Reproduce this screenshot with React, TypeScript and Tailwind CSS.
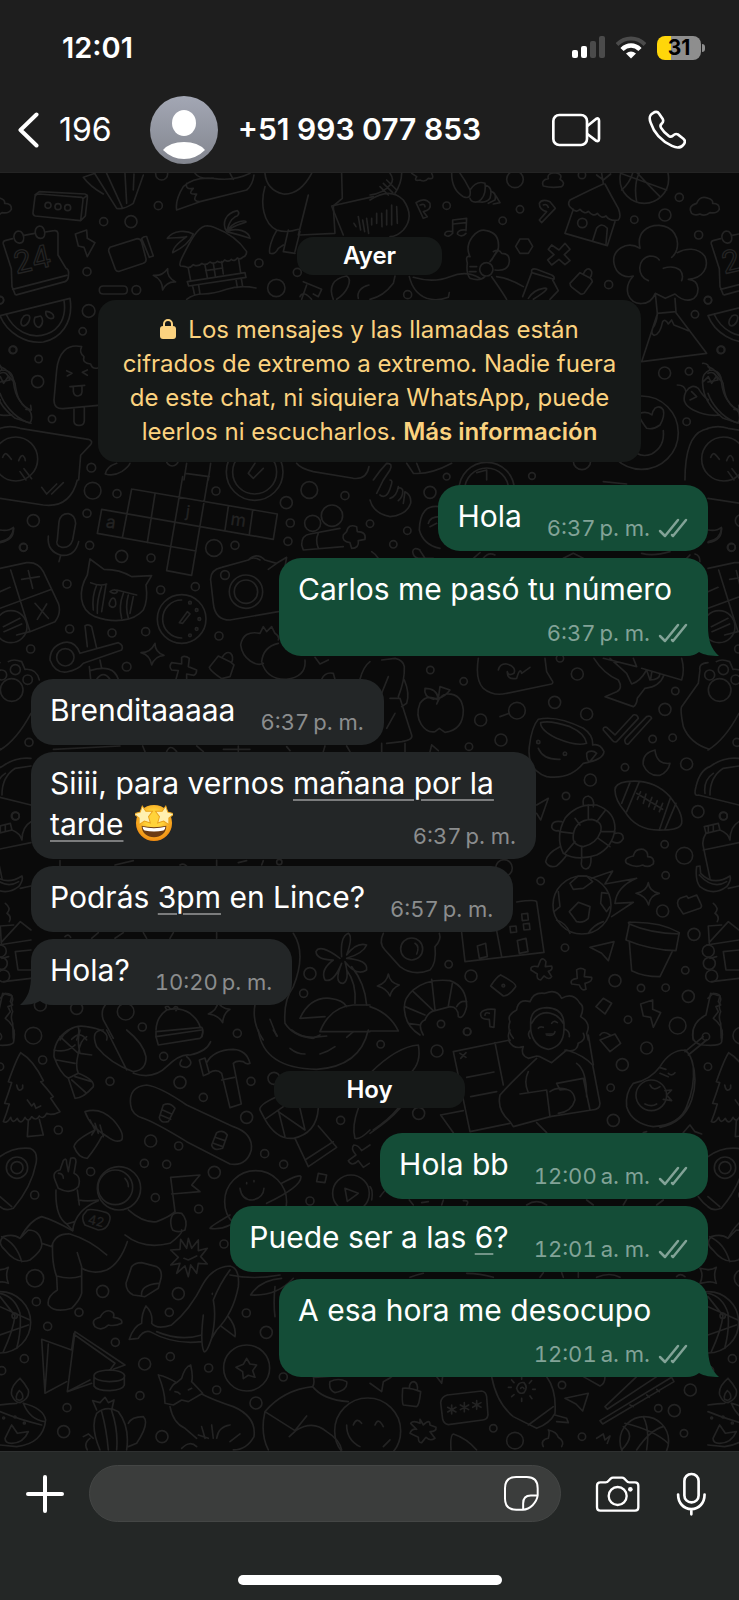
// App.tsx
import type { ReactNode } from 'react';

type Tile = {
  x: number;
  y: number;
  circles: number[][];
  paths: string[];
  labels?: { x: number; y: number; text: string; size: number; rotate: number }[];
};

// Wallpaper doodles, drawn at 3x and scaled down per tile
const TILES: Tile[] = [
  {
    x: 0,
    y: 170,
    circles: [
      [485, 12, 18], [475, 107, 12], [311, 155, 12], [393, 155, 18], [261, 305, 12], [409, 360, 13], [777, 279, 12],
      [829, 354, 26], [892, 307, 12], [266, 423, 19], [248, 484, 11], [38, 540, 11], [116, 567, 11], [113, 635, 18],
      [156, 747, 11], [274, 893, 13], [144, 106, 9], [174, 110, 9], [203, 113, 9], [764, 906, 85], [764, 906, 66],
      [0, 390, 11], [47, 867, 66], [517, 870, 18],
    ],
    paths: [
      'M105 75L118 65L255 72Q264 74 262 84L256 138L242 152M118 72L245 82Q250 84 249 90L242 152L106 138Q98 136 99 128L105 80Q107 72 118 72M249 86L262 76',
      'M38 206L15 212Q8 214 10 222L34 296L36 350L45 372Q46 376 52 374L195 335Q205 330 205 320L206 308Q205 298 198 295L174 255V190Q172 180 162 182L136 186M72 196L104 190M38 358L200 316',
      'M56 183C68 183 74 200 70 212C66 222 50 222 44 210C38 198 44 184 56 183M119 168C131 168 137 186 133 198C129 208 113 208 108 196C102 184 107 170 119 168',
      'M226 192L260 180L262 205L285 218L262 260L252 232L235 228Z',
      'M330 232Q324 238 327 246L346 298Q350 306 358 304L430 280Q440 276 438 266L425 216Q422 206 412 206ZM440 200L460 258L448 262L425 206Q432 198 440 200',
      'M542 288Q536 284 545 265C570 215 590 175 615 168Q630 166 642 172C690 190 720 215 740 245Q740 258 728 262Q722 270 712 264Q704 276 694 268Q686 278 674 270Q666 282 652 274Q642 284 630 276Q618 288 606 280Q594 292 580 284Q568 298 556 290Z',
      'M565 295L572 332M562 335L735 308L738 322L566 348ZM716 268L722 308M615 285L622 322M665 275L670 312M640 280L646 318M617 302L668 294M578 348L584 375M596 346L600 372M708 328L712 352M724 325L728 350M560 388Q580 372 610 372T680 358T768 354',
      'M680 185C665 160 675 130 712 122C722 130 712 140 706 140C690 150 686 165 680 185C700 150 740 150 738 156C730 160 700 165 680 185C710 170 748 185 750 205C735 200 700 190 680 185M580 192C560 180 520 180 502 205C520 202 545 205 560 200C540 215 520 230 518 248C535 240 565 225 580 192',
      'M503 296Q500 322 527 336Q500 334 488 360Q488 330 460 316Q488 318 503 296Z',
      'M310 348H370Q382 348 382 360T370 372H310Q298 372 298 360T310 348Z',
      'M0 437L210 385C222 460 180 505 130 516C80 522 20 490 0 437M18 432C40 480 90 510 140 492C180 478 200 440 192 392M72 438C60 450 60 466 70 468C84 466 92 448 88 438Q82 432 72 438M105 442C98 458 108 472 118 472C130 464 130 446 122 438ZM138 424C134 438 148 450 160 444C164 434 152 424 138 424Z',
      'M245 530C200 520 175 550 170 600L162 690Q162 718 190 716L294 706M245 530Q236 548 252 560Q246 580 272 582Q276 598 294 594M222 716V755Q224 768 240 766Q252 766 253 752V714M200 602L216 610L202 618M262 600L247 607L262 616M210 650L254 646M220 650V664Q222 678 234 678Q248 676 246 660V648',
      'M0 590Q30 600 45 640C50 680 60 700 80 715Q98 725 94 750Q92 762 80 756C40 740 10 700 0 670M0 610Q20 600 30 630L0 636M92 706L94 720L78 718',
      'M0 775Q30 765 60 775L265 808Q280 812 272 824L242 856L236 930M8 862Q14 848 20 852T34 868M56 872Q64 852 70 858T76 872M60 905L78 930M72 896L95 926',
      'M250 22L285 10M250 22Q270 50 310 72M285 12L350 115Q370 120 400 100L430 15M320 10L368 115M375 10L380 100M402 12L400 60',
      'M530 120Q525 90 550 50Q580 20 640 25Q700 35 750 10M530 120L600 95L740 60Q758 45 762 15M560 40Q555 60 580 55Q560 75 590 72Q575 95 600 95M585 10Q600 30 640 24M690 10L700 28',
      'M795 10Q800 60 850 72Q900 75 935 10M795 50C780 100 790 160 830 180Q860 190 895 178M925 75L895 195M865 180L850 245M900 185L885 245M830 182C815 205 805 240 810 250Q825 255 835 235L850 225M850 245L885 250M1000 108L1005 190L900 195M1025 10L1027 85L1000 108',
      'M995 108L1120 80M995 108L1030 195M1062 160L1068 170M1075 140L1082 180M1088 150L1094 185M1100 145L1106 190',
      'M910 335L965 358L955 380L940 372M920 345L905 388M900 380Q910 360 935 388M1000 388C985 350 1000 325 1040 318C1060 330 1040 370 1010 388M1075 385C1070 365 1085 350 1107 345',
      'M316 912Q320 890 350 880M316 912Q340 920 365 905Q385 892 390 880M560 880L552 930M632 880L625 930M556 910L628 920M745 910L765 880M745 910L760 925L790 895M890 880Q900 895 940 905L1060 925Q1100 930 1107 890',
    ],
    labels: [{ x: 48, y: 312, text: '24', size: 92, rotate: -13 }],
  },
  {
    x: 370,
    y: 170,
    circles: [
      [435, 28, 25], [636, 15, 11], [928, 82, 12], [885, 135, 18], [793, 149, 11], [986, 195, 12], [230, 107, 11],
      [450, 118, 11], [398, 152, 11], [349, 298, 20], [716, 344, 12], [1014, 391, 11], [975, 433, 11], [113, 374, 12],
      [884, 609, 18], [957, 604, 11], [1054, 539, 11], [950, 755, 11], [486, 918, 10], [230, 920, 10], [823, 27, 73],
      [637, 159, 14], [815, 788, 110], [350, 960, 83], [350, 960, 66], [636, 873, 26],
    ],
    paths: [
      'M755 60Q800 20 790 -40M752 10L890 60M775 -20Q830 40 870 80M800 95Q790 40 810 5',
      'M520 48Q512 30 535 26Q530 10 555 8Q580 12 570 28Q588 38 575 50Q545 55 520 48',
      'M245 10Q245 60 280 80Q305 90 300 60Q285 30 270 10M300 60Q320 30 345 40Q350 80 325 95Q305 100 300 85M345 45Q370 50 360 85Q350 100 325 95M365 65Q380 70 375 90L355 100M378 78L390 98L370 102',
      'M0 75Q40 70 60 45Q75 30 60 10M30 50L55 75M40 40L68 68M50 30L80 60M95 10Q95 40 75 70',
      'M0 90Q60 50 100 90Q135 140 100 180Q80 200 60 200M5 145V165M20 130V160M35 130L36 170M50 120V165M65 105V165M80 110L82 160',
      'M125 10L140 20Q130 35 150 30Q165 38 175 25Q195 30 185 10',
      'M138 98Q165 80 180 100Q185 120 160 125L172 140L160 145ZM150 105Q165 100 165 110',
      'M248 190V150L290 145L288 182M250 162L288 158M248 185Q225 180 224 194Q235 205 248 190M288 180Q262 178 262 192Q275 204 288 190',
      'M508 100Q515 85 540 95L556 115L515 158L508 150L530 125Q508 120 508 100M520 105Q530 100 535 112',
      'M700 42Q660 60 600 90Q590 105 605 115Q620 130 630 118Q645 135 655 124Q670 142 682 130Q695 148 708 138Q720 155 745 150Q755 140 745 115Q725 80 705 42M610 118L585 190L712 227L735 155M668 212L680 175Q695 155 712 175L708 222M680 15L700 30L722 12M695 10L700 40',
      'M965 130Q952 108 980 100Q990 75 1015 85Q1030 90 1028 100Q1050 100 1048 118Q1040 132 1020 128Q1005 140 990 132Q975 138 965 130',
      'M810 232C800 190 830 165 868 166C910 168 930 205 920 240Q915 255 905 262M810 235C770 210 725 240 732 280C738 315 770 325 790 318Q765 345 775 375C790 410 840 410 856 370L886 385L915 372C950 405 985 390 984 355Q982 330 955 328C1000 325 1018 290 1005 260C985 230 945 235 922 248M835 332C800 320 800 265 840 258Q860 258 868 270M880 295Q910 285 930 300Q942 315 935 332M856 370L862 430L918 425L915 385',
      'M862 432L815 575L1010 550L918 428M862 432Q860 460 848 475Q842 490 852 496Q870 495 878 455Q885 445 895 462L905 450L912 465Q925 470 955 482',
      'M300 260C280 220 320 170 350 182Q390 190 385 235L365 270M300 260Q285 255 292 280Q288 310 300 325Q330 335 345 320M370 245Q385 235 395 250Q420 250 418 275Q415 305 375 300M360 275L385 240M300 290H320M298 305H318',
      'M0 388Q40 380 70 340L75 318M118 320Q130 370 170 385Q200 395 235 382L238 368M130 322Q190 340 240 320T330 325M365 320Q400 370 410 388M380 320Q420 325 460 350',
      'M485 300Q490 295 500 298L545 315Q555 320 552 328L485 308ZM485 308L458 380M548 330L565 362L540 388M475 385Q490 360 520 355T490 388',
      'M450 207H475L488 229L475 250H450L437 229Z',
      'M545 225L567 240L585 220L600 238L583 254L600 272L585 284L567 268L545 285L533 270L552 254L535 238Z',
      'M630 308L600 340Q600 348 606 352L632 372Q642 374 645 366L667 335Q666 328 660 324ZM640 312Q650 290 662 300Q670 308 660 324',
      'M810 730Q800 735 830 775Q850 780 870 765Q885 740 880 720Q870 705 855 715Q848 722 846 735Q830 722 810 730M880 782Q885 830 845 852Q820 862 800 850',
      'M998 580Q1015 578 1020 600Q1055 600 1055 640C1060 680 1080 710 1107 720M1020 600Q995 610 998 640Q1000 700 1060 745L1107 760M1000 635L1015 620L1025 640L1040 618L1055 635M922 645Q945 645 948 665Q965 640 985 655Q1000 680 1015 690M948 665Q930 700 970 720Q1010 740 1050 735M965 665L980 680L960 690',
      'M945 930Q945 800 1000 780L1014 776',
      'M10 930Q30 900 50 880Q70 880 60 900L40 930M110 880L130 910Q180 915 245 880M140 880L150 905M320 908L350 900V930',
    ],
  },
  {
    x: 0,
    y: 480,
    circles: [
      [278, 32, 25], [351, 41, 12], [648, 33, 12], [928, 30, 25], [859, 68, 18], [1035, 47, 12], [871, 129, 12],
      [864, 184, 12], [996, 107, 32], [938, 130, 24], [100, 122, 18], [261, 100, 12], [269, 196, 12], [70, 202, 12],
      [365, 229, 18], [453, 234, 12], [642, 204, 25], [705, 196, 12], [482, 330, 12], [586, 320, 12], [201, 312, 12],
      [209, 447, 12], [336, 459, 12], [437, 455, 12], [657, 468, 12], [92, 507, 12], [380, 560, 13], [545, 417, 73],
      [738, 335, 35], [738, 335, 50], [675, 285, 13], [33, 440, 48], [196, 532, 26], [46, 569, 15], [83, 599, 14],
      [35, 630, 34], [5, 585, 15], [87, 787, 12], [570, 368, 4], [590, 390, 4], [598, 417, 4], [590, 447, 4], [570, 466, 4],
    ],
    paths: [
      'M0 55L130 75Q210 85 232 0M125 22L140 42L170 12M155 42L190 8',
      'M172 180Q165 195 185 202Q210 205 218 180L227 130Q225 105 205 101Q182 100 177 125ZM145 168Q140 215 185 226Q225 230 236 185M182 226L177 245',
      'M0 150Q25 155 40 142Q45 180 0 188',
      'M395 27L832 102L820 178L305 88L292 160L588 213M395 27L367 174M465 42L442 188M548 -10L500 272L575 286L625 -10M685 80L675 150M758 92L748 163',
      'M905 195Q905 165 930 162L1020 145M910 210L1030 200M905 195L910 210M955 160Q945 180 955 205M1040 155Q1045 130 1070 140L1072 155Q1100 155 1095 178L1075 182Q1078 205 1055 205L1050 188Q1025 185 1030 165Z',
      'M0 265L80 248Q115 245 130 275L175 370Q185 400 165 425L90 455L50 465M32 270L90 455M0 385L155 328M0 335L30 322M65 298L118 290M85 272L98 325M105 370L145 415M140 372L112 418M10 440L60 415M12 455L65 432',
      'M270 237L262 285C235 330 235 390 285 410C340 430 400 425 430 390C445 360 440 330 438 315L455 287L395 290Q360 268 312 268ZM272 308Q300 320 320 312M350 330L410 345M290 315Q275 350 280 390M305 320Q290 360 292 400M318 315L305 395M370 340Q355 380 365 415M385 345Q375 380 385 415M400 350L390 400M330 335Q345 325 352 335Q345 345 330 335M332 360Q320 380 340 382Q352 378 345 358Q338 350 332 360',
      'M545 360A57 57 0 1 0 545 474M538 428L562 395L570 402L548 430Z',
      'M632 300Q630 270 665 262L745 240Q770 215 795 240L830 250L860 232L855 260M632 300L640 370Q645 420 690 420L835 395M745 240Q760 228 780 240M805 268L830 250',
      'M255 438Q265 430 275 440L290 505M255 438L262 500M240 520L355 488Q372 495 365 510L250 550M240 520Q225 480 190 488Q150 500 150 540Q165 580 200 576Q235 570 250 550M268 560L272 598M300 540L305 565M270 572Q340 550 355 598M290 598Q310 570 330 598',
      'M465 490Q465 518 492 526Q465 528 455 555Q450 525 423 518Q452 518 465 490Z',
      'M545 532Q555 525 568 535L565 560L590 570Q590 582 582 586L560 582V598M545 532V552L515 548Q505 560 515 570L535 572L528 598',
      'M655 528L628 562Q630 572 665 596L690 590L702 555L690 545ZM668 530Q680 512 692 520Q702 530 695 548',
      'M780 460Q730 450 722 495C728 540 770 560 790 550M780 460L790 440L800 455L815 440L825 460Q840 470 835 480M785 545Q790 500 835 490M785 545Q800 600 860 598Q920 590 915 540M945 532L960 552L985 540',
      'M25 545Q40 535 65 545L75 568Q110 565 118 600M0 810Q50 780 93 700M965 598Q975 575 1000 580L1005 598M1080 598Q1090 560 1110 545',
      'M428 798L435 815M500 815Q510 790 530 815M590 798L610 815M670 808H750M715 798V815M860 800L870 812M975 798L970 815M1040 798L1050 815M160 808L360 798',
    ],
    labels: [
      { x: 316, y: 142, text: 'a', size: 52, rotate: 8 },
      { x: 556, y: 110, text: 'j', size: 48, rotate: 8 },
      { x: 690, y: 134, text: 'm', size: 52, rotate: 8 },
    ],
  },
  {
    x: 370,
    y: 480,
    circles: [
      [180, 37, 18], [112, 152, 11], [70, 193, 11], [0, 131, 11], [1085, 202, 11], [181, 570, 11], [281, 604, 11],
      [622, 582, 18], [916, 633, 11], [554, 667, 18], [441, 692, 25], [650, 702, 18], [332, 720, 18], [885, 688, 18],
      [848, 777, 11], [908, 773, 11], [393, 780, 18], [297, 800, 11], [950, 852, 18], [570, 535, 11],
      [505, 786, 5], [585, 821, 5],
    ],
    paths: [
      'M20 40L40 0M30 45Q50 60 62 20Q70 0 60 0M60 55Q80 50 85 20M85 62Q100 50 98 30Q92 20 85 25M0 60Q10 100 60 110Q110 105 122 70Q125 45 105 35L100 70',
      'M210 80Q150 70 148 150Q160 195 210 205M210 110Q180 110 175 130M200 130L180 140M150 210Q130 200 128 215Q130 232 145 235H190M150 212L165 235',
      'M5 215Q20 225 25 235M310 235L330 218M340 235Q355 215 375 225M580 235L610 220L640 235M815 220Q850 230 900 215M975 222Q990 225 990 245M960 225L950 235M1015 185Q1050 180 1055 145M700 5L770 12',
      'M205 660Q170 640 150 670C130 720 165 760 195 755L208 745L225 757Q280 750 280 690Q275 640 230 642Q210 645 200 672M205 655Q200 625 165 625Q160 650 190 658L200 655M210 620L240 630Q225 650 205 655Z',
      'M35 540L75 535Q100 540 103 560Q105 600 85 650M55 590L35 640M60 655H90L125 765Q130 780 95 785L50 790M35 790V816M105 790V816M75 700L50 745M103 600Q120 640 110 670L95 680',
      'M325 535Q315 600 340 625Q370 650 410 640L545 612Q552 608 545 600L530 575L525 535M385 570Q390 550 410 552Q440 560 432 580Q415 590 412 575Q410 600 440 595Q450 560 455 580L480 562',
      'M672 535Q700 580 745 600Q760 625 740 635L705 650L790 680Q800 675 802 655L825 625Q870 620 882 585M720 535L770 580L785 612Q810 605 830 570L840 600Q870 600 870 580M790 535L800 560L700 535M815 565L935 600Q945 570 935 535M845 578L842 598',
      'M505 718Q485 740 478 800Q470 870 530 890Q600 900 640 850Q700 840 702 815Q690 790 668 795Q670 765 640 745Q560 705 505 718M512 728Q540 720 600 740Q645 760 650 790Q620 800 560 775Q510 750 512 728M505 805Q520 840 570 838M650 820Q650 845 660 845L680 820Q670 810 655 815ZM418 700L390 710',
      'M700 750Q698 740 710 742L735 765L790 705Q802 702 805 715L740 785Q732 788 728 782ZM765 785Q762 780 770 772L830 710Q842 705 845 715L775 792Q768 795 765 785Z',
      'M855 810Q815 820 820 855Q835 890 870 886Q895 875 900 850Q860 855 855 810',
      'M1014 548Q985 550 990 570L985 610L935 680Q930 690 940 740Q960 790 1018 808M185 795L180 815M185 795L205 812',
    ],
  },
  {
    x: 0,
    y: 740,
    circles: [
      [46, 228, 12], [121, 795, 18], [230, 805, 18], [377, 815, 25], [427, 861, 12], [100, 887, 25],
      [930, 701, 18], [911, 760, 12], [838, 366, 8],
    ],
    paths: [
      'M15 760Q40 760 38 780Q30 800 38 815Q30 830 38 850L40 895M0 775L15 760',
      'M180 900Q210 850 260 860Q330 870 320 900M215 898Q240 870 260 900M230 900Q240 880 235 862M320 790Q300 810 310 840L340 895',
      'M468 870Q470 830 500 810Q540 800 570 820Q595 840 600 860M468 875L605 862Q612 870 605 890M468 875V890M500 808Q490 798 505 800Q515 815 525 800Q540 800 528 812',
      'M655 785Q660 805 690 808Q670 820 668 848Q655 825 625 822Q650 812 655 785',
      'M880 580Q920 640 880 740Q850 780 855 850Q880 890 940 895L960 885M765 795Q755 850 790 900M810 838L830 888',
      'M1020 655Q960 610 948 635Q950 660 1000 660Q960 690 975 720Q1000 730 1025 670Q1000 730 1030 730Q1050 720 1035 665Q1070 710 1100 690Q1105 660 1040 655Q1090 640 1100 615Q1070 605 1040 645Q1060 590 1045 580Q1020 590 1025 650M1040 690Q1070 730 1065 790M1055 680Q1095 730 1100 795',
      'M900 835Q930 770 990 775Q1030 780 1040 800M900 835L975 830M960 875Q990 800 1060 795H1110M960 875H1110',
      'M345 375L400 362M650 360V378M715 368L740 362M785 375L790 362M180 362V378M540 375Q550 368 560 378M275 595L295 578M345 595L370 578M430 578L440 595M510 595L520 578M650 595V578M195 590Q205 580 212 592',
    ],
  },
  {
    x: 370,
    y: 740,
    circles: [
      [765, 82, 11], [588, 168, 11], [661, 120, 18], [984, 215, 18], [1061, 228, 11], [884, 313, 11], [943, 347, 25],
      [887, 406, 11], [512, 423, 11], [878, 513, 18], [972, 583, 18], [585, 623, 11], [236, 673, 11], [303, 708, 18],
      [946, 691, 11], [735, 722, 18], [813, 744, 11], [887, 743, 11], [955, 769, 18], [774, 839, 11], [923, 857, 25],
      [213, 852, 11], [291, 875, 11], [402, 384, 25], [636, 495, 87], [125, 627, 33], [1015, 633, 18], [1018, 670, 18],
      [1025, 708, 18], [400, 737, 4], [1008, 890, 11],
    ],
    paths: [
      'M735 150Q735 130 770 125Q850 115 900 170Q940 220 935 250Q930 270 880 270Q800 275 765 215Q735 180 735 150M780 128L755 190M808 125L770 215M902 172L868 270M918 190L885 268M800 160L878 208M812 155L802 178M828 162L820 190M846 172L836 200M862 182L852 208M878 190L868 215',
      'M985 165Q970 170 978 140Q990 90 1020 80Q1060 50 1107 55M985 165L1107 195M1020 165Q1020 110 1060 85L1107 78M1005 160Q1000 120 1030 100',
      'M585 235Q620 190 680 195Q735 215 735 265Q730 320 680 345Q620 365 580 340Q555 290 585 235M610 285Q615 240 665 238Q700 245 692 275Q680 310 640 320Q605 315 610 285M615 235L630 255M655 195V238M705 212L680 245M735 275L695 275M720 320L685 295M635 358V320M585 340L615 305M568 275L610 280M640 195Q635 170 655 168Q675 175 670 200M735 280Q760 275 760 295Q750 315 728 305M635 360Q630 385 648 387Q665 385 663 352M570 320Q530 340 527 365Q535 385 560 378Q580 360 590 345M575 245Q545 240 545 262Q550 275 565 272',
      'M500 195L535 175L512 240L500 220',
      'M770 370Q758 355 790 348Q795 325 820 328Q835 335 833 350Q855 350 850 372Q835 385 818 375Q795 385 770 370',
      'M1003 260L1045 250L1050 270L1008 280ZM1015 258V278M1030 255V275M1008 280Q995 300 1000 320L1020 415M1050 270Q1075 280 1080 300M1000 330L1107 308M1080 300Q1080 260 1107 245',
      'M980 380L990 378L992 400Q1030 440 1080 408Q1085 420 1070 440Q1030 470 990 440Q975 420 980 380M988 405Q1030 450 1070 425M1075 445L1107 438',
      'M625 487L660 500L655 535Q640 550 620 545L598 515ZM600 430L625 408H650L668 425L640 445L610 448ZM565 455L570 500L552 515M560 540Q590 550 600 580M655 580Q670 555 700 545M720 500L710 515L692 490L695 458L712 460M665 415L728 393L705 432L800 415Q740 440 735 490L790 487L725 530',
      'M835 428Q838 455 868 460Q840 465 836 495Q828 468 798 460Q830 455 835 428',
      'M925 480Q920 490 925 500L940 522L990 505Q998 500 992 490L980 465L955 475L950 468L930 475Z',
      'M275 578L285 665L522 637L500 485Q495 478 440 486M380 572L395 650M322 618L347 610L352 650L328 655ZM442 602L468 595L474 635L448 640ZM455 522L473 520L475 540L457 542ZM460 552L478 550L480 568L462 570ZM420 560L438 558L440 576L422 578Z',
      'M778 552Q770 545 785 547Q870 545 928 578L918 632Q840 630 768 600ZM778 552Q840 580 928 582M778 605L785 692Q820 710 870 710L908 632',
      'M40 580Q25 610 45 630L90 680Q130 710 180 690Q200 670 195 620Q215 600 208 580M135 610Q150 620 140 642',
      'M55 702Q60 730 88 735Q65 745 60 768Q50 745 22 738Q50 730 55 702M660 622L732 605L715 662L695 640Z',
      'M512 660Q520 652 528 665L526 680L545 678Q550 690 535 694L545 710Q538 722 522 708L512 720Q498 718 502 702L483 690Q480 675 504 680Z',
      'M620 690Q632 680 645 690L643 710L665 712Q670 725 645 730L648 748Q635 755 628 735L605 732Q598 718 622 715Z',
      'M150 885Q110 860 105 820Q95 780 130 750Q170 715 240 722Q290 740 290 800Q280 840 265 830Q265 800 240 800L195 812Q175 815 165 840Q140 850 160 885M105 800L165 825M130 755L190 812M185 718L195 810M248 725L235 798M290 785Q270 780 260 800M115 850L150 855',
      'M392 705Q380 710 362 738L400 768Q415 770 437 740Q440 730 392 705M375 808L372 862L360 860L358 838Q330 840 332 820Q340 805 375 808M358 820Q345 815 345 826M0 800Q60 820 85 873H0',
      'M430 895Q410 870 420 845Q410 825 440 810Q445 775 480 785Q490 755 525 760Q560 745 575 775Q610 755 630 790Q645 800 632 830Q665 850 650 880L655 900M482 870V850Q480 805 530 803Q580 805 582 850V870M485 850Q500 820 530 818Q565 822 580 850M505 865Q510 858 520 862M545 850Q550 840 562 848M528 882H548M585 868Q600 875 598 890M482 870Q470 880 480 895',
      'M700 775L725 790L705 822L678 800ZM812 792L848 780L848 808L872 818L850 862L842 832L820 828Z',
      'M1022 760L1050 768L1045 785L1052 795L1038 800L1045 815L1030 835M1022 760L1008 825Q960 850 970 900M1030 835Q1065 860 1055 900',
      'M1015 558L1055 555M1015 558L1018 610M1020 605L1075 545L1107 570M1060 635L1107 630M1060 635L1068 690H1107M1025 725L1107 715M1020 655L1040 650M1030 490Q1050 505 1035 520Q1050 530 1042 545M1010 615L1107 600',
    ],
  },
  {
    x: 0,
    y: 1030,
    circles: [
      [128, 90, 12], [330, 154, 12], [175, 300, 12], [491, 79, 12], [540, 157, 18], [610, 202, 12], [753, 154, 12],
      [740, 262, 18], [712, 10, 12], [452, 333, 18], [536, 348, 12], [794, 371, 12], [851, 403, 12], [433, 400, 12],
      [500, 403, 12], [272, 425, 12], [643, 427, 18], [466, 503, 12], [596, 537, 12], [104, 495, 12], [105, 745, 26],
      [308, 784, 18], [535, 791, 18], [109, 815, 12], [237, 847, 12], [143, 889, 12], [508, 847, 12], [739, 849, 12],
      [799, 907, 18], [346, 937, 12], [73, 986, 12], [434, 1002, 18], [511, 980, 12], [626, 1014, 12], [850, 1041, 12],
      [650, 1080, 12], [420, 1097, 12], [768, 1119, 18], [201, 1133, 12], [191, 1205, 18], [486, 1220, 18], [5, 1022, 12],
      [930, 513, 12], [672, 642, 12], [1022, 271, 12], [822, 145, 18], [740, 1014, 69], [357, 475, 65], [346, 472, 52],
      [51, 413, 32], [51, 413, 18], [0, 877, 92], [44, 857, 8], [1053, 490, 55], [767, 515, 93], [11, 1164, 3],
      [45, 1161, 3], [73, 1179, 3],
    ],
    paths: [
      'M62 68Q50 85 25 155L35 158Q25 190 14 220L28 222Q20 250 10 275Q20 282 32 262Q38 285 52 265Q62 288 75 262Q85 280 95 260Q108 275 118 258Q130 270 140 250Q155 258 180 245Q165 225 152 205L160 200Q140 175 122 155L130 152Q100 90 62 68M85 272L82 320L130 315L118 268M50 165Q55 190 68 175V165M82 210L95 228L102 220L108 235L122 228',
      'M205 0Q160 30 162 80Q180 130 205 145L225 205Q250 205 280 170Q285 150 235 130Q225 110 235 70Q240 30 260 20M162 60Q200 70 225 45M170 90L225 100M205 145L235 130M215 150L260 190M225 140L275 155M180 20L235 70M240 0Q230 30 240 70L275 75',
      'M290 50Q270 0 310 0M290 50Q330 100 400 125Q440 120 438 80Q430 40 380 0M320 0L380 120M400 130Q460 150 500 110T570 75Q620 65 632 35M545 90Q530 110 560 112Q585 100 560 80',
      'M468 20L475 45L600 25Q610 20 608 0M468 20L605 0',
      'M598 90L615 84L628 130L610 137ZM620 98Q640 60 700 58Q740 60 750 100Q740 105 730 95Q710 90 700 100L724 222L690 233L665 130Q650 115 628 128M665 150L703 142',
      'M775 0Q790 115 950 118Q1080 110 1105 0M870 55Q890 72 915 72M960 72Q985 65 1005 50M875 0Q900 22 940 22L980 18M820 0L832 18M1040 22L1060 5',
      'M392 225Q385 170 440 165Q480 170 560 225L700 290Q760 310 754 360Q740 410 690 402L560 335Q470 280 430 265Q395 255 392 225M490 225Q510 215 525 235L505 275Q480 280 478 262ZM488 240L515 252M482 255L512 268M650 308Q670 298 682 315L668 355Q640 365 635 345ZM645 322L675 332M640 340L668 350',
      'M255 245Q300 230 340 270Q375 310 365 330Q350 340 325 322Q270 290 255 245M270 270L285 300L275 315M285 300Q225 330 222 350Q235 385 262 385Q290 350 305 320M300 285L310 320M285 280L295 310',
      'M780 240Q775 225 830 200M780 240L795 268L850 230M795 268Q830 330 880 325Q950 310 955 235M835 240L855 320M835 245L915 300M900 235L915 300M885 325L925 410L1010 352L955 288M915 390L1000 335M1075 235Q1055 290 1065 325Q1080 330 1110 300',
      'M1110 345L1085 362Q1075 345 1062 345Q1050 355 1068 375L1045 392Q1055 412 1075 392L1090 412L1108 400',
      'M0 380Q40 350 90 355Q115 365 108 400Q95 470 40 535Q15 545 0 530M0 500L35 530',
      'M165 450Q155 425 180 420L190 392Q200 380 200 400L205 425L212 385Q228 380 228 395L222 430Q245 440 235 470Q210 495 175 475ZM175 430Q190 430 190 445M168 480Q165 560 200 582L225 575M232 480L238 525M200 582L218 602Q225 540 295 512M235 510Q260 515 295 510M375 445Q385 455 385 470M385 540Q430 580 470 575Q510 560 525 545M375 615Q430 660 510 640Q550 610 545 600M382 635Q360 700 320 720Q280 735 245 715',
      'M218 602Q160 570 125 560Q90 570 60 625Q40 610 10 620Q-10 640 15 660Q50 705 90 690Q130 660 125 640L155 650M60 625L85 600Q120 600 125 640M155 650Q165 610 210 612Q270 630 320 675M158 640Q155 700 170 740L172 780Q140 800 145 825Q165 850 215 835Q240 810 245 790V710L232 668M170 738Q210 750 245 738M5 620Q50 640 65 695M262 540Q275 535 320 548Q335 555 328 575Q320 600 295 600L255 585Q245 570 250 555Z',
      'M525 545L512 442L600 435L575 465L600 485L515 492M515 560Q520 545 545 550Q565 570 555 600Q535 610 518 600Q508 580 515 560',
      'M845 460Q900 430 903 440Q905 470 800 520M690 555Q630 590 630 595Q660 600 690 585M720 475Q725 510 757 510Q790 505 792 475M740 458v3M762 452v3M955 430L980 435L975 458L950 455ZM1035 475L1075 490L1042 514Z',
      'M565 625L575 655L595 630L595 662L622 655L602 680L622 702L595 700L590 730L572 705L565 740L555 708L530 730L540 700L512 705L535 682L512 660L540 658L542 628L560 655ZM552 685L565 690L590 678',
      'M395 710Q405 698 425 698L470 710Q488 720 483 745L475 775L435 800L400 795Q378 785 378 760ZM425 798Q420 765 475 760',
      'M285 890Q270 870 300 862Q315 835 335 845Q345 850 340 862Q370 865 365 880Q345 890 325 885Q305 905 285 890',
      'M388 928Q400 890 425 880Q425 850 438 828Q460 850 455 880Q470 900 515 885Q570 840 610 760Q640 710 690 708Q720 715 715 770Q700 850 650 900L635 925M388 928L415 925Q430 900 450 905Q520 945 605 935M470 905Q540 935 605 915M690 720Q660 760 640 810Q650 860 635 925Q620 970 612 965Q600 940 610 855M665 890L705 920Q710 890 685 860M637 790v3',
      'M0 719Q12 720 25 712Q15 735 25 760Q12 754 0 756M0 790Q45 800 60 850Q65 900 50 955M0 830L90 870M0 915L85 885M10 965Q40 900 45 857L0 800',
      'M125 928L135 1090L200 1055M125 928L215 960M145 942L135 1085M225 905L202 1085L275 1060M225 905L375 1005L340 1018M225 915L345 1000L330 1020M215 960L222 910M202 1085L270 1050M282 1040Q280 1022 328 1020Q372 1022 374 1038Q372 1055 328 1055Q285 1052 282 1040V1068Q290 1082 330 1082Q368 1080 373 1065V1040',
      'M60 1045Q30 1070 35 1095Q45 1118 60 1118Q90 1105 85 1080Q75 1060 60 1045M58 1082Q45 1095 50 1108Q60 1115 68 1105Q70 1090 58 1082M0 1125Q30 1120 50 1120M70 1120Q130 1135 137 1170Q130 1240 50 1250L0 1245M0 1145Q60 1170 125 1185M70 1120Q90 1170 135 1175M15 1225L35 1185L52 1210L85 1205Q70 1240 35 1240Q15 1240 15 1225',
      'M290 1140L278 1112L300 1118L315 1102L325 1118L342 1110L335 1140M290 1150Q270 1190 300 1260M290 1150Q320 1125 355 1145Q390 1190 380 1260M305 1145Q320 1200 325 1260M335 1142Q355 1200 350 1260M385 1180Q395 1160 430 1160Q450 1180 410 1240L385 1250M250 1220L265 1212L280 1225M262 1260Q250 1240 270 1225',
      'M475 1035Q500 1040 530 1058L545 1045Q555 1010 572 1005Q580 1040 575 1055L608 1090L565 1115L545 1110L520 1125L495 1120Q495 1085 475 1035M530 1058Q520 1060 510 1080M510 1130Q520 1180 555 1195L590 1225M605 1092Q640 1110 700 1130Q770 1160 762 1220Q740 1260 700 1260M605 1190L615 1225M635 1185L640 1225M690 1185Q655 1190 650 1225M595 1215L625 1225M720 1212L690 1235M545 1255Q570 1230 590 1250M525 1085Q535 1085 540 1092M565 1080L575 1075',
      'M740 985L750 1002L770 1005L758 1022L765 1042L745 1036L730 1046L728 1025L708 1012L730 1003Z',
      'M938 1070Q850 1080 795 1145L885 1202L920 1158M795 1145Q780 1210 805 1260M868 1220L890 1200Q940 1170 980 1205Q1020 1230 1025 1260M940 1040Q945 1060 938 1070Q970 1110 1045 1115M945 1042L1005 1038M990 1055Q985 1080 1005 1088Q1045 1080 1040 1055Q1015 1042 990 1055M1060 1185Q1070 1160 1085 1180M1040 1185Q1040 1230 1080 1250',
      'M752 795Q780 750 845 745M752 795Q830 800 880 745M825 770Q820 820 825 860M690 735Q760 750 840 735',
    ],
    labels: [{ x: 262, y: 580, text: '42', size: 38, rotate: 14 }],
  },
  {
    x: 370,
    y: 1030,
    circles: [
      [32, 43, 11], [292, 5, 11], [201, 63, 18], [146, 250, 18], [830, 54, 18], [757, 104, 18], [722, 173, 11],
      [730, 271, 18], [1014, 110, 11], [576, 1065, 11], [961, 1080, 18], [865, 1135, 11], [913, 1142, 18],
      [370, 1195, 11], [435, 1232, 25], [636, 1220, 11], [942, 1210, 11], [823, 1233, 73], [844, 196, 46], [-7, 1203, 99],
    ],
    paths: [
      'M0 130Q80 50 145 45Q155 100 120 130M0 310Q60 270 90 235M10 300Q100 240 110 180',
      'M250 65L420 30M250 65L300 305L420 280M375 38L400 165M290 142L372 126M302 200L380 185M270 70L288 82M288 68L272 85M212 255L280 242M212 255L250 308M500 78L510 80L545 98L590 60Q640 75 668 105L690 220Q690 240 665 240L540 260M415 30Q430 60 460 50Q450 75 475 85L500 78M585 60Q620 70 625 40',
      'M500 85Q420 160 390 195Q380 240 420 275L430 290L540 260L530 180L450 192M475 125Q460 155 475 188M560 160L640 145L660 240M560 160L570 180Q610 170 615 210Q605 245 565 250M620 100Q650 120 650 200M655 15L670 105M540 185Q560 170 590 178M500 278L530 308M420 0Q410 20 420 32M482 0Q490 50 535 58Q580 50 582 0M530 15Q550 20 555 5M625 40Q650 30 640 10',
      'M690 30L720 65L752 40L735 12ZM690 15Q700 0 720 15',
      'M945 60Q900 60 870 110Q840 150 790 160Q765 190 770 230Q785 280 850 290Q930 285 950 230Q975 170 970 110Q965 75 945 60M965 90Q985 150 965 210Q940 280 870 292M945 65L1000 20M955 75L1010 30M868 112L888 118M895 130Q905 140 915 128M870 130L895 140M840 165Q850 185 870 170M825 222Q845 232 860 222M885 182L905 180L890 195L905 212L880 208',
      'M970 0Q960 40 1000 45Q1060 50 1055 30V0',
      'M820 308L830 305M940 308Q955 290 960 285L975 305L995 312M0 470Q10 480 5 510M30 500Q45 480 48 480M118 510L130 525M155 518L175 515M220 510L215 525M280 512Q300 510 290 525M470 525Q500 505 530 525M650 510L670 525M760 525L770 508M860 525L880 510M120 742Q140 735 160 730M290 730Q330 730 370 742M510 742L520 728M580 742L575 728M625 728V742M680 742Q720 725 750 742M920 740Q930 728 945 740',
      'M1014 530Q1000 520 985 500M1014 719Q1002 718 990 715Q1002 735 990 760Q1002 758 1014 756',
      'M0 1060L35 1085L40 1055Q60 1045 65 1040M200 1040L215 1060L218 1040M15 1185Q25 1160 40 1190M40 1250L60 1230',
      'M98 1075Q95 1120 100 1125L140 1130Q148 1125 152 1085Q120 1072 98 1075M118 1075Q118 1055 132 1055Q145 1060 142 1082',
      'M232 1095L335 1083Q348 1085 350 1100L354 1155Q352 1170 338 1170L235 1184Q222 1182 218 1168L212 1118Q214 1100 232 1095M245 1125V1152M233 1132L258 1146M258 1132L233 1146M283 1118V1145M271 1125L296 1139M296 1125L271 1139M320 1112V1138M308 1118L333 1132M333 1118L308 1132',
      'M365 1040Q380 1120 430 1160L500 1195Q540 1180 555 1150Q560 1080 530 1040M475 1185L550 1130M555 1155L590 1165L595 1178L560 1175M440 1075Q445 1055 462 1058Q475 1072 462 1088Q445 1095 440 1075M452 1075Q458 1068 462 1076M455 1042V1048M425 1050L432 1058M485 1052L478 1060M415 1072H424M488 1078H496M425 1100L432 1094M455 1105V1114M480 1098L486 1106',
      'M585 1105L655 1090L638 1143L618 1122ZM800 1040L705 1130L712 1138L860 1040M690 1172L905 1042L912 1055L698 1182ZM780 1125L790 1130M830 1095L838 1102M860 1078L868 1085M640 1040L690 1068Q705 1062 705 1040',
      'M150 1168L160 1185Q180 1165 180 1185L198 1192Q200 1205 180 1205L195 1225Q180 1235 168 1222L155 1238Q145 1240 145 1222L120 1210Q125 1195 140 1198L122 1180Q130 1170 150 1180Z',
      'M520 1250Q510 1230 535 1225Q540 1205 535 1200Q560 1205 565 1222Q585 1235 575 1250',
      'M755 1260Q800 1215 760 1190M765 1180Q850 1200 895 1240M820 1160Q840 1200 830 1260M880 1190Q840 1200 800 1260M680 1225L700 1212L705 1230L720 1218L712 1240M243 1260Q240 1215 250 1212Q290 1225 320 1260',
    ],
  },
];

function Wallpaper() {
  return (
    <svg
      className="absolute inset-0 h-full w-full text-[#232323]"
      viewBox="0 173 739 1278"
      preserveAspectRatio="xMidYMin slice"
      fill="none"
      stroke="currentColor"
      strokeWidth={5}
      strokeLinecap="round"
      strokeLinejoin="round"
      aria-hidden="true"
    >
      <g id="doodles">
        {TILES.map((tile) => (
          <g key={`${tile.x}-${tile.y}`} transform={`translate(${tile.x} ${tile.y}) scale(0.3333)`}>
            {tile.circles.map(([cx, cy, r], i) => (
              <circle key={i} cx={cx} cy={cy} r={r} />
            ))}
            {tile.paths.map((d, i) => (
              <path key={i} d={d} />
            ))}
            {tile.labels?.map((l) => (
              <text
                key={l.text}
                transform={`translate(${l.x} ${l.y}) rotate(${l.rotate})`}
                fontSize={l.size}
                strokeWidth={l.size > 80 ? 4 : 1}
                fill={l.size > 80 ? 'none' : 'currentColor'}
              >
                {l.text}
              </text>
            ))}
          </g>
        ))}
      </g>
      {/* the pattern repeats sideways */}
      <use href="#doodles" x={708} />
      <use href="#doodles" x={-708} />
    </svg>
  );
}

function StarStruck() {
  const star = 'M0 -10L3 -4L10 -3L5 2L6 9L0 6L-6 9L-5 2L-10 -3L-3 -4Z';
  return (
    <svg className="ml-3 inline-block h-[38px] w-[38px] align-top" viewBox="0 0 40 40" role="img" aria-label="🤩">
      <defs>
        <radialGradient id="face" cx="0.5" cy="0.4" r="0.6">
          <stop offset="0.4" stopColor="#ffd33a" />
          <stop offset="1" stopColor="#f08a10" />
        </radialGradient>
      </defs>
      <circle cx="20" cy="20" r="19" fill="url(#face)" />
      <path d="M7 23C14 25 26 25 33 23C33 31 27 35 20 35S7 31 7 23Z" fill="#6b3a12" />
      <path d="M8 24C15 26 25 26 32 24Q32 27 30 28Q20 30 10 28Q8 27 8 24Z" fill="#fff" />
      <path d={star} transform="translate(9 12) rotate(-8)" fill="#fff0b0" stroke="#e9a21b" strokeWidth="1" />
      <path d={star} transform="translate(31 12) rotate(8)" fill="#fff0b0" stroke="#e9a21b" strokeWidth="1" />
    </svg>
  );
}

function Ticks() {
  return (
    <svg className="h-5 w-[30px]" viewBox="0 0 30 20" fill="none" stroke="currentColor" strokeWidth="2.500" strokeLinecap="round" strokeLinejoin="round">
      <path d="M2 13L7 18L20 2" />
      <path d="M14 17L15 18L28 2" />
    </svg>
  );
}

function DateLink({ children }: { children: ReactNode }) {
  return (
    <a href="#fecha" className="underline decoration-white/40 decoration-2 underline-offset-[5px]">
      {children}
    </a>
  );
}

interface Message {
  id: number;
  out: boolean;
  lines: ReactNode[];
  time: string;
  stacked?: boolean;
  wide?: boolean;
  tail?: boolean;
}

// Times keep the narrow no-break space that es-PE puts before "a. m." / "p. m."
const YESTERDAY_OUT: Message[] = [
  { id: 1, out: true, lines: ['Hola'], time: '6:37\u202fp. m.' },
  { id: 2, out: true, lines: ['Carlos me pasó tu número'], time: '6:37\u202fp. m.', stacked: true, tail: true },
];

const YESTERDAY_IN: Message[] = [
  { id: 3, out: false, lines: ['Brenditaaaaa'], time: '6:37\u202fp. m.' },
  {
    id: 4,
    out: false,
    lines: [
      <>Siiii, para vernos <DateLink>mañana por la</DateLink></>,
      <><DateLink>tarde</DateLink><StarStruck /></>,
    ],
    time: '6:37\u202fp. m.',
    wide: true,
  },
  { id: 5, out: false, lines: [<>Podrás <DateLink>3pm</DateLink> en Lince?</>], time: '6:57\u202fp. m.' },
  { id: 6, out: false, lines: ['Hola?'], time: '10:20\u202fp. m.', tail: true },
];

const TODAY: Message[] = [
  { id: 7, out: true, lines: ['Hola bb'], time: '12:00\u202fa. m.' },
  { id: 8, out: true, lines: [<>Puede ser a las <DateLink>6</DateLink>?</>], time: '12:01\u202fa. m.' },
  { id: 9, out: true, lines: ['A esa hora me desocupo'], time: '12:01\u202fa. m.', stacked: true, tail: true },
];

function Bubble({ message }: { message: Message }) {
  const { out, lines, time, stacked, wide, tail } = message;
  const last = lines.length - 1;

  return (
    <div
      className={`relative rounded-[22px] pt-[11px] pr-5 pb-[10px] pl-[19px] text-[30px] leading-[41px] text-white ${
        out ? 'self-end bg-[#144d37]' : 'self-start bg-[#232627]'
      } ${stacked ? 'min-w-[429px]' : ''} ${wide ? 'w-[505px]' : ''}`}
    >
      {tail && (
        <svg
          className={`absolute bottom-0 h-[30px] w-[34px] ${
            out ? '-right-[11px] text-[#144d37]' : '-left-[11px] -scale-x-100 text-[#232627]'
          }`}
          viewBox="0 0 34 30"
          fill="currentColor"
        >
          <path d="M23 0C23 14 26 23 34 30C26 30 19 29 14 26C10 29 6 30 0 30V0Z" />
        </svg>
      )}
      {lines.slice(0, last).map((line, i) => (
        <p key={i} className="whitespace-nowrap">{line}</p>
      ))}
      {/* relative keeps the text above the tail */}
      <div className={`relative flex ${stacked ? 'flex-col gap-[6px]' : 'items-end justify-between gap-[25px]'}`}>
        <p className="mb-1 whitespace-nowrap">{lines[last]}</p>
        <span
          className={`flex items-center gap-2 self-end whitespace-nowrap text-[22px] leading-[26px] tabular-nums ${
            out ? 'text-[#82a397]' : 'text-[#8b8d8e]'
          }`}
        >
          {time}
          {out && <Ticks />}
        </span>
      </div>
    </div>
  );
}

function MessageGroup({ messages }: { messages: Message[] }) {
  return (
    <div className="flex flex-col gap-[7px]">
      {messages.map((m) => (
        <Bubble key={m.id} message={m} />
      ))}
    </div>
  );
}

function StatusBar() {
  return (
    <div className="flex h-[87px] items-center justify-between pt-2 pr-[34px] pl-[62px]">
      <span className="text-[29px] font-semibold">12:01</span>
      <div className="flex items-center gap-[11px]">
        <svg className="h-[23px] w-[33px]" viewBox="0 0 33 23" fill="#fff">
          <rect x="0" y="14" width="6" height="8" rx="2" />
          <rect x="9" y="10" width="6" height="12" rx="2" />
          <rect x="18" y="5" width="6" height="17" rx="2" fill="#4b4b4b" />
          <rect x="27" y="0" width="6" height="22" rx="2" fill="#4b4b4b" />
        </svg>
        <svg className="h-[23px] w-[30px]" viewBox="0 0 30 23" fill="none" strokeWidth="4">
          <path d="M1 8.500Q7 2.500 15 2.500T29 8.500" stroke="#4b4b4b" />
          <path d="M6 13.500Q10 9.500 15 9.500T24 13.500" stroke="#fff" strokeWidth="4.500" />
          <path d="M10 17.500Q15 13.500 20 17.500L15 22.500Z" fill="#fff" />
        </svg>
        <div className="flex items-center gap-px">
          <span className="flex h-6 w-11 items-center justify-center rounded-lg bg-linear-to-r from-[#ffd60a] from-31% to-[#8e8e8e] to-31% text-[21px] font-bold text-black">
            31
          </span>
          <span className="h-2 w-[3px] rounded-r-full bg-[#8e8e8e]" />
        </div>
      </div>
    </div>
  );
}

function ChatHeader() {
  return (
    <div className="flex h-[85px] items-center pr-[53px] pl-[18px]">
      <button type="button" aria-label="Atrás" className="flex items-center gap-5">
        <svg className="h-9 w-[21px]" viewBox="0 0 21 36" fill="none" stroke="#fff" strokeWidth="4" strokeLinecap="round" strokeLinejoin="round">
          <path d="M18.500 2.500L2.500 18L18.500 33.500" />
        </svg>
        <span className="text-[32px]">196</span>
      </button>
      <svg className="ml-[38px] h-[68px] w-[68px] shrink-0" viewBox="0 0 68 68">
        <defs>
          <linearGradient id="avatar" x1="0" y1="0" x2="0" y2="1">
            <stop offset="0" stopColor="#a3a7b4" />
            <stop offset="1" stopColor="#83868f" />
          </linearGradient>
        </defs>
        <circle cx="34" cy="34" r="34" fill="url(#avatar)" />
        <ellipse cx="34" cy="27" rx="12" ry="13" fill="#fff" />
        <path d="M13 54Q20 46 34 46T55 54Q46 63 34 63T13 54Z" fill="#fff" />
      </svg>
      <h1 className="ml-5 flex-1 whitespace-nowrap text-[30px] font-semibold">+51 993 077 853</h1>
      <div className="flex items-center gap-[47px]">
        <button type="button" aria-label="Videollamada">
          <svg className="h-[34px] w-[49px]" viewBox="546 337 147 102" fill="none" stroke="#fff" strokeWidth="8" strokeLinejoin="round">
            <rect x="550" y="343" width="101" height="90" rx="18" />
            <path d="M652 376L678 355Q687 350 687 360V414Q687 424 678 420L652 400" />
          </svg>
        </button>
        <button type="button" aria-label="Llamar">
          <svg className="h-[39px] w-[38px]" viewBox="832 328 116 118" fill="none" stroke="#fff" strokeWidth="8" strokeLinejoin="round">
            <path d="M847 337C856 331 862 333 866 339L877 355C880 361 878 365 874 369C869 373 869 377 872 382C877 391 886 400 896 407C901 410 905 410 909 405C913 401 917 399 923 402L940 415C946 420 946 425 942 431C934 443 921 445 905 437C873 422 850 397 840 366C834 350 837 343 847 337Z" />
          </svg>
        </button>
      </div>
    </div>
  );
}

function Composer() {
  return (
    <footer className="border-t border-[#2e3030] bg-[#242726] px-[26px] pt-[13px] pb-[15px]">
      <div className="flex items-center pr-[6px]">
        <button type="button" aria-label="Adjuntar" className="shrink-0">
          <svg className="h-[38px] w-[38px]" viewBox="0 0 38 38" stroke="#fff" strokeWidth="4" strokeLinecap="round">
            <path d="M19 2V36M2 19H36" />
          </svg>
        </button>
        <div className="ml-[25px] flex h-[57px] min-w-0 flex-1 items-center rounded-full border border-[#444645] bg-[#3b3d3c] pr-[21px] pl-6">
          <input type="text" aria-label="Mensaje" className="w-full min-w-0 flex-1 bg-transparent text-[30px] text-white outline-none" />
          <button type="button" aria-label="Stickers" className="shrink-0">
            <svg className="h-[35px] w-[35px]" viewBox="401 109 106 106" fill="none" stroke="#fff" strokeWidth="6" strokeLinejoin="round">
              <path d="M404 146Q404 112 438 112H470Q503 112 503 146V168C500 190 480 210 458 211H438Q404 211 404 177Z" />
              <path d="M459 210V192Q459 168 482 168H503" />
            </svg>
          </button>
        </div>
        <button type="button" aria-label="Cámara" className="ml-[34px] shrink-0">
          <svg className="h-9 w-[45px]" viewBox="676 107 135 108" fill="none" stroke="#fff" strokeWidth="7" strokeLinejoin="round">
            <path d="M692 126H708Q713 126 716 122L723 115Q726 112 730 112H757Q761 112 764 115L771 122Q774 126 779 126H796Q806 126 806 136V201Q806 211 796 211H692Q682 211 682 201V136Q682 126 692 126Z" />
            <circle cx="744" cy="167" r="27" />
            <circle cx="782" cy="147" r="7" fill="#fff" stroke="none" />
          </svg>
        </button>
        <button type="button" aria-label="Mensaje de voz" className="ml-9 shrink-0">
          <svg className="h-11 w-[31px]" viewBox="918 90 93 133" fill="none" stroke="#fff" strokeWidth="8" strokeLinecap="round">
            <rect x="943" y="96" width="43" height="86" rx="21" />
            <path d="M924 158C924 184 941 202 964 202S1004 184 1004 158M964 202V218" />
          </svg>
        </button>
      </div>
      <div className="mx-auto mt-[53px] h-[10px] w-[264px] rounded-full bg-white" />
    </footer>
  );
}

export default function App() {
  return (
    <div className="flex min-h-screen flex-col bg-[#0a0a0a] font-['Inter','Liberation_Sans',sans-serif] text-white">
      <header className="border-b border-[#242424] bg-[#1e1e1e]">
        <StatusBar />
        <ChatHeader />
      </header>

      <main className="relative flex-1 overflow-hidden">
        <Wallpaper />
        <div className="relative flex flex-col px-[31px] pt-16 pb-[72px]">
          <span className="flex h-[38px] items-center self-center rounded-2xl bg-[#161918] px-[46px] text-2xl font-semibold">Ayer</span>

          <div className="mt-[25px] w-[543px] max-w-full self-center rounded-[18px] bg-[#161918] py-[13px] text-center text-2xl leading-[34px] text-[#fbd27f]">
            <svg className="mr-3 inline-block h-[21px] w-4 align-[-1px]" viewBox="0 0 16 21">
              <rect x="0" y="8" width="16" height="13" rx="3" fill="#fbd27f" />
              <path d="M4 9V6A4 4 0 0 1 12 6V9" fill="none" stroke="#fbd27f" strokeWidth="2" />
            </svg>
            Los mensajes y las llamadas están
            <br />
            cifrados de extremo a extremo. Nadie fuera
            <br />
            de este chat, ni siquiera WhatsApp, puede
            <br />
            leerlos ni escucharlos.{' '}
            <a href="#info" className="font-semibold">Más información</a>
          </div>

          <div className="mt-[23px] flex flex-col gap-[23px]">
            <MessageGroup messages={YESTERDAY_OUT} />
            <MessageGroup messages={YESTERDAY_IN} />
          </div>

          <span className="mt-[66px] mb-[25px] flex h-[37px] items-center self-center rounded-2xl bg-[#161918] px-[72px] text-2xl font-semibold">Hoy</span>

          <MessageGroup messages={TODAY} />
        </div>
      </main>

      <Composer />
    </div>
  );
}
